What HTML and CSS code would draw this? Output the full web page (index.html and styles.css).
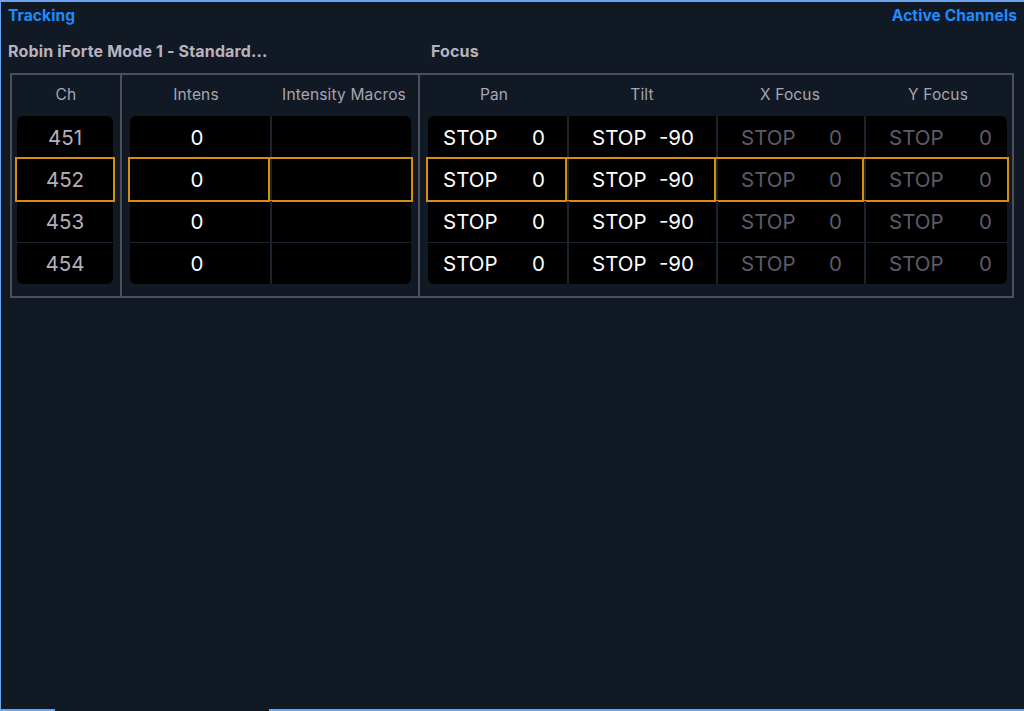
FILE: index.html
```html
<!DOCTYPE html>
<html lang="en">
<head>
  <meta charset="UTF-8" />
  <meta name="viewport" content="width=device-width, initial-scale=1.0"/>
  <title>Tracking</title>
  <link rel="stylesheet" href="styles.css">
</head>
<body>
  <div class="window">

    <div class="topbar">
      <span class="title">Tracking</span>
      <span class="title">Active Channels</span>
    </div>

    <div class="labels">
      <span class="fixture">Robin iForte Mode 1 - Standard...</span>
      <span>Focus</span>
    </div>

    <div class="sheet">
      <!-- channel numbers -->
      <div class="section sec-ch">
        <div class="heads"><span>Ch</span></div>
        <div class="box">
          <div class="row"><div class="cell ch">451</div></div>
          <div class="row sel"><div class="cell ch">452</div></div>
          <div class="row"><div class="cell ch">453</div></div>
          <div class="row"><div class="cell ch">454</div></div>
        </div>
      </div>

      <!-- intensity -->
      <div class="section sec-int">
        <div class="heads"><span>Intens</span><span>Intensity Macros</span></div>
        <div class="box">
          <div class="row"><div class="cell int">0</div><div class="cell"></div></div>
          <div class="row sel"><div class="cell int">0</div><div class="cell"></div></div>
          <div class="row"><div class="cell int">0</div><div class="cell"></div></div>
          <div class="row"><div class="cell int">0</div><div class="cell"></div></div>
        </div>
      </div>

      <!-- focus -->
      <div class="section sec-focus">
        <div class="heads"><span>Pan</span><span>Tilt</span><span>X Focus</span><span>Y Focus</span></div>
        <div class="box">
          <div class="row">
            <div class="cell pt"><span>STOP</span><span>0</span></div>
            <div class="cell pt"><span>STOP</span><span>-90</span></div>
            <div class="cell pt dim"><span>STOP</span><span>0</span></div>
            <div class="cell pt dim"><span>STOP</span><span>0</span></div>
          </div>
          <div class="row sel">
            <div class="cell pt"><span>STOP</span><span>0</span></div>
            <div class="cell pt"><span>STOP</span><span>-90</span></div>
            <div class="cell pt dim"><span>STOP</span><span>0</span></div>
            <div class="cell pt dim"><span>STOP</span><span>0</span></div>
          </div>
          <div class="row">
            <div class="cell pt"><span>STOP</span><span>0</span></div>
            <div class="cell pt"><span>STOP</span><span>-90</span></div>
            <div class="cell pt dim"><span>STOP</span><span>0</span></div>
            <div class="cell pt dim"><span>STOP</span><span>0</span></div>
          </div>
          <div class="row">
            <div class="cell pt"><span>STOP</span><span>0</span></div>
            <div class="cell pt"><span>STOP</span><span>-90</span></div>
            <div class="cell pt dim"><span>STOP</span><span>0</span></div>
            <div class="cell pt dim"><span>STOP</span><span>0</span></div>
          </div>
        </div>
      </div>
    </div>

    <div class="edge">
      <span class="edge-a"></span>
      <span class="edge-b"></span>
    </div>

  </div>
</body>
</html>
```

FILE: styles.css
```css
:root {
  --bg: #111a24;
  --frame: #6ba5f2;
  --title: #1f8cff;
  --label: #b8b2be;
  --head: #aaa4b2;
  --grid: #4d4f5b;
  --divider: #1a232e;
  --select: #d4900c;
  --dim: #5e5b6c;
}

html, body {
  margin: 0;
  height: 100%;
}

body {
  background-color: var(--bg);
  font-family: Inter, "Noto Sans", sans-serif;
  color: #ffffff;
}

.window {
  height: 100vh;
  box-sizing: border-box;
  border-top: 2px solid var(--frame);
  border-left: 1px solid var(--frame);
  display: flex;
  flex-direction: column;
}

.topbar {
  display: flex;
  justify-content: space-between;
  align-items: center;
  height: 27px;
  padding: 0 7px;
}

.title {
  color: var(--title);
  font-weight: 700;
  font-size: 15.5px;
  letter-spacing: 0.1px;
}

.labels {
  display: flex;
  align-items: center;
  height: 44px;
  padding-left: 7px;
  font-weight: 700;
  font-size: 16px;
  letter-spacing: 0.15px;
  color: var(--label);
}

.labels .fixture {
  width: 423px;
}

.sheet {
  margin-left: 9px;
  width: 1004px;
  box-sizing: border-box;
  border: 2px solid var(--grid);
  display: flex;
}

.section {
  display: flex;
  flex-direction: column;
  padding-bottom: 12px;
  border-right: 2px solid var(--grid);
  box-sizing: border-box;
}

.section:last-child {
  border-right: none;
}

.sec-ch { width: 110px; }
.sec-int { width: 298px; }
.sec-focus { flex: 1; }

.heads {
  display: grid;
  grid-auto-flow: column;
  grid-auto-columns: 1fr;
  align-items: center;
  height: 39px;
  padding-bottom: 2px;
  text-align: center;
  font-size: 15.5px;
  letter-spacing: 0.15px;
  color: var(--head);
}

.box {
  background-color: #000;
  border-radius: 6px;
}

.sec-ch .box { margin: 0 7px 0 5px; }
.sec-int .box { margin: 0 7px 0 8px; }
.sec-focus .box { margin: 0 5px 0 8px; }

.row {
  display: grid;
  height: 42px;
  box-sizing: border-box;
}

.row + .row {
  border-top: 1px solid var(--divider);
}

.sec-int .row { grid-template-columns: 140px 1fr; }
.sec-focus .row { grid-template-columns: 139px 149px 148px 1fr; }

.cell {
  display: flex;
  align-items: center;
  justify-content: center;
  font-size: 20.5px;
}

.cell + .cell {
  border-left: 2px solid var(--divider);
}

.sel .cell {
  outline: 2px solid var(--select);
}

.ch {
  color: #b5afbb;
}

.int {
  padding-right: 6px;
}

.pt {
  justify-content: space-between;
  padding: 0 22px 0 23px;
}

.pt:first-child { padding-left: 15px; }
.pt:last-child { padding-right: 15px; }

.dim {
  color: var(--dim);
}

.edge {
  margin-top: auto;
  display: flex;
  height: 2px;
}

.edge-a {
  width: 54px;
  background-color: var(--frame);
}

.edge-b {
  flex: 1;
  margin-left: 214px;
  background-color: var(--frame);
}
```
